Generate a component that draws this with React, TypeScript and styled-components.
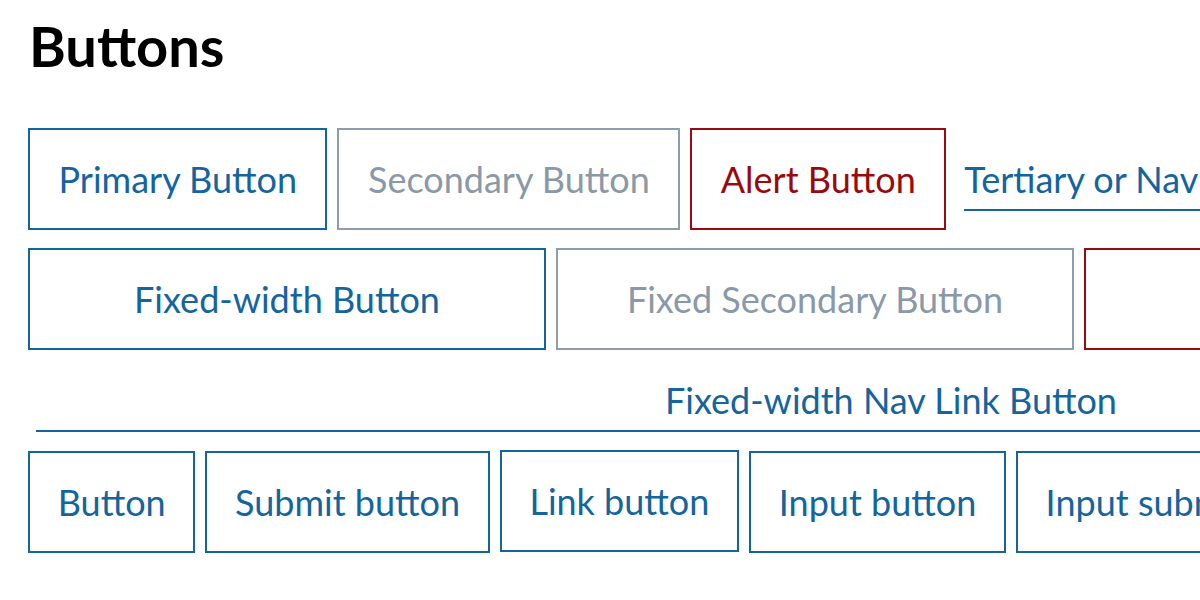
import React from "react";
import styled, { createGlobalStyle, css } from "styled-components";

const GlobalStyle = createGlobalStyle`
  html, body {
    margin: 0;
    padding: 0;
    background: #ffffff;
    overflow: hidden;
  }
  body {
    font-family: Lato, "Open Sans", "Liberation Sans", sans-serif;
  }
`;

type Variant = "primary" | "secondary" | "alert";

const colors: Record<Variant, { border: string; text: string }> = {
  primary: { border: "#14649e", text: "#14649e" },
  secondary: { border: "#8e9dac", text: "#8a99a8" },
  alert: { border: "#9a0a10", text: "#990a0e" },
};

const Page = styled.main`
  padding: 0 0 0 28px;
  width: 3000px;
`;

const Title = styled.h1`
  font-size: 56px;
  font-weight: 700;
  color: #000000;
  margin: 0 0 0 1px;
  padding-top: 17px;
  height: 111px;
  line-height: 58px;
`;

const Row = styled.div<{ $top?: number }>`
  display: flex;
  align-items: baseline;
  gap: 10px;
  margin-top: ${(p) => p.$top ?? 0}px;
`;

const Btn = styled.button<{ $variant?: Variant; $fixed?: boolean; $raised?: boolean }>`
  flex-shrink: 0;
  box-sizing: border-box;
  display: flex;
  align-items: center;
  justify-content: center;
  height: 102px;
  padding: 0 28.5px;
  background: #ffffff;
  font-family: inherit;
  font-size: 36px;
  font-weight: 400;
  white-space: nowrap;
  border: 2px solid ${(p) => colors[p.$variant ?? "primary"].border};
  color: ${(p) => colors[p.$variant ?? "primary"].text};
  border-radius: 0;
  cursor: pointer;
  ${(p) =>
    p.$fixed &&
    css`
      width: 518px;
      padding: 0;
    `}
  ${(p) =>
    p.$raised &&
    css`
      position: relative;
      top: -1px;
    `}
`;

const FormBtn = styled(Btn)`
  padding: 0 27.7px;
`;

const NavLink = styled.a<{ $block?: boolean }>`
  flex-shrink: 0;
  display: inline-block;
  font-size: 36px;
  color: #14649e;
  text-decoration: none;
  white-space: nowrap;
  padding-bottom: 8px;
  border-bottom: 2px solid #14649e;
  margin-left: 8px;
  cursor: pointer;
  ${(p) =>
    p.$block &&
    css`
      display: block;
      width: 1710px;
      margin-left: 8px;
      text-align: center;
    `}
`;

export default function App() {
  return (
    <>
      <GlobalStyle />
      <Page>
        <Title>Buttons</Title>
        <Row>
          <Btn>Primary Button</Btn>
          <Btn $variant="secondary">Secondary Button</Btn>
          <Btn $variant="alert">Alert Button</Btn>
          <NavLink>Tertiary or Nav Link Button</NavLink>
        </Row>
        <Row $top={18}>
          <Btn $fixed>Fixed-width Button</Btn>
          <Btn $fixed $variant="secondary">Fixed Secondary Button</Btn>
          <Btn $fixed $variant="alert">Fixed Alert Button</Btn>
        </Row>
        <Row $top={28}>
          <NavLink $block>Fixed-width Nav Link Button</NavLink>
        </Row>
        <Row $top={19}>
          <FormBtn>Button</FormBtn>
          <FormBtn>Submit button</FormBtn>
          <FormBtn $raised>Link button</FormBtn>
          <FormBtn>Input button</FormBtn>
          <FormBtn>Input submit button</FormBtn>
        </Row>
      </Page>
    </>
  );
}
